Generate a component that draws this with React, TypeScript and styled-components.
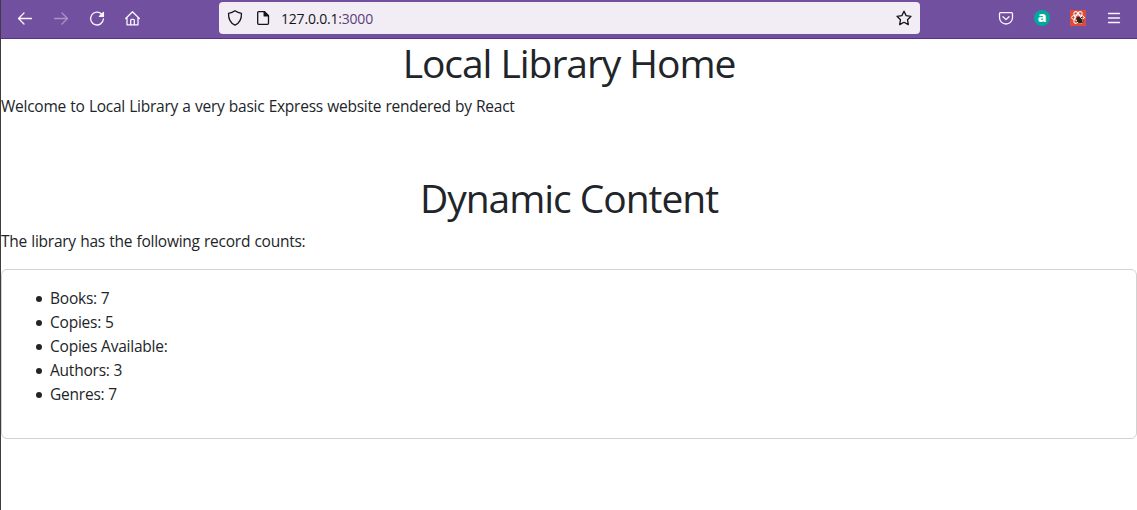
import React from "react";
import styled, { createGlobalStyle } from "styled-components";

const GlobalStyle = createGlobalStyle`
  * { box-sizing: border-box; }
  body {
    margin: 0;
    background: #fff;
    color: #212529;
    font-family: "Open Sans", "Noto Sans", sans-serif;
    font-size: 15.5px;
    line-height: 24px;
    overflow: hidden;
  }
`;

const Window = styled.div`
  height: 510px;
  border-left: 1px solid #3d3d3f;
`;

const Toolbar = styled.header`
  display: flex;
  align-items: flex-start;
  height: 39px;
  background: #7250a0;
  border-bottom: 1px solid #56318a;
`;

const IconGroup = styled.div<{ $start: number }>`
  display: flex;
  gap: 20px;
  padding: 10px 0 0 ${(p) => p.$start}px;
`;

const Icon = styled.svg<{ $dim?: boolean }>`
  display: block;
  flex: none;
  width: 16px;
  height: 16px;
  overflow: visible;
  fill: none;
  stroke: currentColor;
  stroke-width: 1.3;
  stroke-linecap: round;
  stroke-linejoin: round;
  opacity: ${(p) => (p.$dim ? 0.4 : 1)};
`;

const Navigation = styled(IconGroup)`
  width: 218px;
  color: #fbf6ff;
`;

const Extensions = styled(IconGroup)`
  color: #fbf6ff;
`;

const AddressBar = styled.div`
  display: flex;
  align-items: center;
  width: 701px;
  height: 32px;
  margin-top: 2px;
  padding: 0 8px;
  border-radius: 4px;
  background: #f2edf5;
  color: #15141a;
  gap: 12px;
`;

const Address = styled.span`
  flex: 1;
  margin-left: -2px;
  padding-top: 1px;
  font-size: 14px;
  line-height: 20px;
  letter-spacing: -0.2px;
`;

const Port = styled.span`
  color: #5a4178;
`;

const Heading = styled.h1`
  margin: 0 0 8px;
  padding-top: 2px;
  font-size: 39px;
  font-weight: 400;
  line-height: 46px;
  text-align: center;
  letter-spacing: -1.05px;
`;

const Paragraph = styled.p`
  margin: 0 0 16px;
  letter-spacing: -0.25px;
  word-spacing: 0.5px;
`;

const Page = styled.main`
  margin-top: -1px;
`;

const Section = styled.section`
  & + & {
    padding-top: 39px;
  }
`;

const Card = styled.div`
  padding: 16px;
  border: 1px solid #d2d2d2;
  border-radius: 6px;
`;

const List = styled.ul`
  margin: 0 0 16px;
  padding-left: 18px;
  list-style: none;
  letter-spacing: -0.22px;
`;

const Item = styled.li`
  display: flex;
  align-items: center;
  gap: 8px;

  &::before {
    content: "";
    width: 6px;
    height: 6px;
    margin-top: 2px;
    border-radius: 50%;
    background: currentColor;
  }
`;

const counts = ["Books: 7", "Copies: 5", "Copies Available:", "Authors: 3", "Genres: 7"];

export default function App() {
  return (
    <Window>
      <GlobalStyle />
      <Toolbar>
        <Navigation $start={16}>
          <Icon viewBox="0 0 16 16"><path d="M14.5 8.5H1.5M7 3 1.5 8.5 7 14" /></Icon>
          <Icon viewBox="0 0 16 16" $dim><path d="M1.5 8.5h13M9 3l5.5 5.5L9 14" /></Icon>
          <Icon viewBox="0 0 16 16">
            <path d="M12.7 4.2A6.4 6.4 0 1 0 14.4 9" />
            <path d="M14.4 2.4v4h-4z" fill="currentColor" />
          </Icon>
          <Icon viewBox="0 0 16 16">
            <path d="M.7 8.500 7.500 1.700l6.800 6.800M2 7.500v7.300h11V7.500M5.700 14.500v-4.200a1 1 0 0 1 1-1h1.600a1 1 0 0 1 1 1v4.200" />
          </Icon>
        </Navigation>
        <AddressBar>
          <Icon viewBox="0 0 16 16">
            <path d="M8 .8c2 1.6 4.1 2.3 6.5 2.5.1 5.4-1.5 9.8-6.5 11.9C3 13.1 1.4 8.7 1.5 3.300 3.900 3.100 6 2.400 8 .8z" />
          </Icon>
          <Icon viewBox="0 0 16 16">
            <path d="M3.700 1.700h5.800l4 4v7.600a1 1 0 0 1-1 1H3.700a1 1 0 0 1-1-1V2.700a1 1 0 0 1 1-1z" />
            <path d="M9.200 1.700v4.200h4.300z" fill="currentColor" />
          </Icon>
          <Address>127.0.0.1<Port>:3000</Port></Address>
          <Icon viewBox="0 0 16 16">
            <path d="m8 1.200 2.100 4.400 4.900.7-3.500 3.400.8 4.900L8 12.300l-4.300 2.300.8-4.900L1 6.300l4.900-.7z" />
          </Icon>
        </AddressBar>
        <Extensions $start={78}>
          <Icon viewBox="0 0 16 16">
            <path d="M2.500 2.700h11a1 1 0 0 1 1 1v3.800a6.500 6.500 0 0 1-13 0V3.700a1 1 0 0 1 1-1zM5 6.700l3 2.900 3-2.900" />
          </Icon>
          <Icon viewBox="0 0 16 16">
            <circle cx="8" cy="8" r="8" fill="#00a99d" stroke="none" />
            <text x="8" y="12" textAnchor="middle" fontSize="14" fontWeight="800" fill="#fff" stroke="none">a</text>
          </Icon>
          <Icon viewBox="0 0 16 16">
            <rect width="16" height="16" fill="#de4b39" stroke="none" />
            <g stroke="#fff" strokeWidth="1">
              <ellipse cx="8" cy="7.500" rx="6.500" ry="2.600" />
              <ellipse cx="8" cy="7.500" rx="6.500" ry="2.600" transform="rotate(60 8 7.500)" />
              <ellipse cx="8" cy="7.500" rx="6.500" ry="2.600" transform="rotate(-60 8 7.500)" />
            </g>
            <ellipse cx="9.300" cy="10" rx="2.300" ry="3.500" fill="#30201f" stroke="none" transform="rotate(-30 9.300 10)" />
            <path d="m6 9 7 1M7 12l5-5M10 13l3-1" stroke="#30201f" strokeWidth="1" />
          </Icon>
          <Icon viewBox="0 0 16 16"><path d="M2.500 3.500h11M2.500 8h11M2.500 12.500h11" /></Icon>
        </Extensions>
      </Toolbar>
      <Page>
        <Section>
          <Heading>Local Library Home</Heading>
          <Paragraph>Welcome to Local Library a very basic Express website rendered by React</Paragraph>
        </Section>
        <Section>
          <Heading>Dynamic Content</Heading>
          <Paragraph>The library has the following record counts:</Paragraph>
          <Card>
            <List>
              {counts.map((item) => (
                <Item key={item}>{item}</Item>
              ))}
            </List>
          </Card>
        </Section>
      </Page>
    </Window>
  );
}
